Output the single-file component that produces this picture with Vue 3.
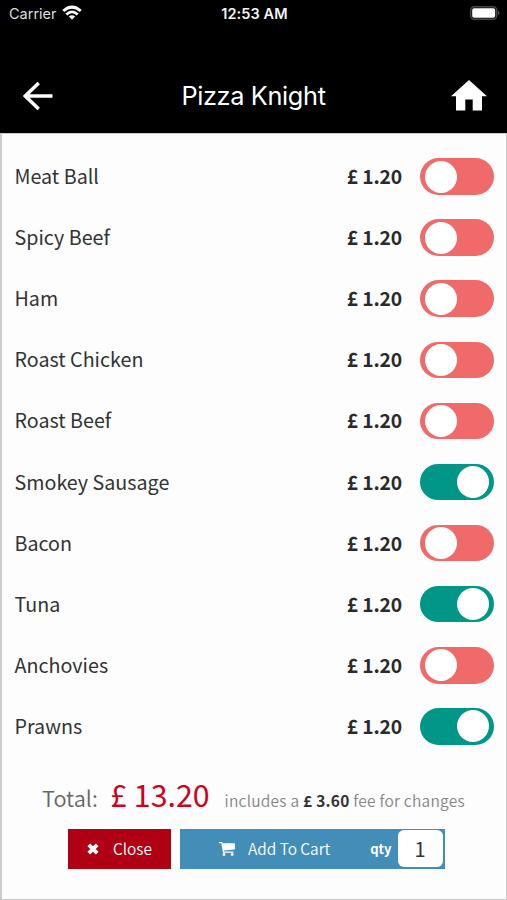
<script setup>
import { ref, computed } from 'vue'

const toppings = ref([
  { name: 'Meat Ball', on: false },
  { name: 'Spicy Beef', on: false },
  { name: 'Ham', on: false },
  { name: 'Roast Chicken', on: false },
  { name: 'Roast Beef', on: false },
  { name: 'Smokey Sausage', on: true },
  { name: 'Bacon', on: false },
  { name: 'Tuna', on: true },
  { name: 'Anchovies', on: false },
  { name: 'Prawns', on: true },
])
const price = 1.2
const base = 9.6
const qty = ref(1)
const fee = computed(() => toppings.value.filter((t) => t.on).length * price)
const total = computed(() => (base + fee.value) * qty.value)
const money = (n) => '£ ' + n.toFixed(2)
</script>

<template>
  <div class="screen">
    <header class="top">
      <div class="status">
        <div class="carrier">
          <span>Carrier</span>
          <svg class="wifi" viewBox="0 0 20 16" width="20" height="16">
            <path d="M1.300 6Q10-1.800 18.700 6" fill="none" stroke="#fff" stroke-width="3" />
            <path d="M4.300 9.400Q10 4.200 15.700 9.400" fill="none" stroke="#fff" stroke-width="2.700" />
            <path d="M6.800 11.600Q10 8.800 13.200 11.600L10 14.800Z" fill="#fff" />
          </svg>
        </div>
        <span class="clock">12:53 AM</span>
        <svg class="battery" viewBox="0 0 30 14" width="30" height="14">
          <rect x=".7" y=".7" width="26" height="12.600" rx="3.500" fill="none" stroke="#4a4a4c" stroke-width="1.400" />
          <rect x="2.200" y="2.200" width="23" height="9.600" rx="1.800" fill="#fff" />
          <path d="M28 4.800Q31 7 28 9.200Z" fill="#59595b" />
        </svg>
      </div>
      <div class="nav">
        <svg class="back" viewBox="0 0 30 28" width="30" height="28">
          <path d="M29.500 14H2.500M15.700 1L2.300 14L15.700 27" fill="none" stroke="#fff" stroke-width="3.500" />
        </svg>
        <h1>Pizza Knight</h1>
        <svg class="home" viewBox="0 0 36 31" width="36" height="31">
          <path d="M18 0L36 16.200H31V30.500H21.700V19.500H14.300V30.500H5V16.200H0Z" fill="#fff" />
        </svg>
      </div>
    </header>

    <main class="panel">
      <ul class="list">
        <li v-for="t in toppings" :key="t.name" class="row">
          <span class="name">{{ t.name }}</span>
          <span class="price">{{ money(price) }}</span>
          <button class="toggle" :class="{ on: t.on }" @click="t.on = !t.on"><i class="knob"></i></button>
        </li>
      </ul>

      <div class="summary">
        <span class="label">Total:</span>
        <span class="total">{{ money(total) }}</span>
        <span class="note">includes a <b>{{ money(fee) }}</b> fee for changes</span>
      </div>

      <div class="actions">
        <button class="close">
          <svg viewBox="0 0 12 12" width="12" height="12">
            <path d="M1.800 1.800L10.200 10.200M10.200 1.800L1.800 10.200" stroke="#fff" stroke-width="3.800" />
          </svg>
          <span>Close</span>
        </button>
        <div class="cart">
          <svg viewBox="0 0 16 14" width="16" height="14">
            <path d="M0 0H2.800Q3.500 0 3.700 1.200H15.400Q16 1.300 16 2V6.700Q16 7.300 15.300 7.400L5 8.600L5.200 9.500H14.400V10.700H4.300Q3.500 10.600 3.800 9.600L2.300 1.200H0Z" fill="#fff" />
            <circle cx="5" cy="12.500" r="1.400" fill="#fff" />
            <circle cx="13.200" cy="12.500" r="1.400" fill="#fff" />
          </svg>
          <span class="add">Add To Cart</span>
          <span class="qty">qty</span>
          <span class="count">{{ qty }}</span>
        </div>
      </div>
    </main>
  </div>
</template>

<style>
body {
  margin: 0;
  background: #fdfdfd;
}
</style>

<style scoped>
.screen {
  width: 507px;
  height: 900px;
  display: flex;
  flex-direction: column;
  overflow: hidden;
  font-family: "Noto Sans CJK SC", "Noto Sans", sans-serif;
  color: #333;
}
.top {
  flex: none;
  height: 133px;
  background: #000;
  color: #fff;
}
.status {
  height: 28px;
  display: grid;
  grid-template-columns: 1fr auto 1fr;
  align-items: center;
  padding: 0 7px 2px 9px;
  box-sizing: border-box;
  font-family: Inter, sans-serif;
  font-size: 14.500px;
}
.carrier {
  display: flex;
  align-items: center;
  gap: 5px;
  color: #ddd;
}
.wifi {
  margin-top: -1px;
}
.clock {
  font-weight: 600;
  letter-spacing: .1px;
  color: #f4f4f4;
}
.battery {
  justify-self: end;
}
.nav {
  height: 105px;
  display: flex;
  align-items: center;
  justify-content: space-between;
  padding: 30px 20px 0 23px;
  box-sizing: border-box;
}
h1 {
  margin: 0 0 0 3px;
  font: 400 25.300px/32px Inter, sans-serif;
  letter-spacing: -.35px;
}
.panel {
  flex: 1;
  box-sizing: border-box;
  border: solid #ccc;
  border-width: 1px 1px 1px 2px;
  background: #fdfdfd;
  padding-top: 12px;
}
.list {
  list-style: none;
  margin: 0;
  padding: 0 12.500px 0 12.500px;
}
.row {
  height: 61.100px;
  display: flex;
  align-items: center;
  font-size: 19.700px;
  line-height: 30px;
}
.name {
  flex: 1;
  margin-bottom: 1px;
}
.price {
  font-weight: 700;
  font-size: 19.300px;
  letter-spacing: -.15px;
  color: #2a2a2a;
  margin: 0 18px 1px 0;
}
button {
  border: 0;
  font: inherit;
  color: inherit;
}
.toggle {
  width: 73.500px;
  height: 36.500px;
  border-radius: 19px;
  padding: 0 5px;
  display: flex;
  align-items: center;
  background: #f06a6a;
}
.toggle.on {
  background: #009788;
  justify-content: flex-end;
}
.knob {
  width: 32px;
  height: 32px;
  border-radius: 50%;
  background: #fff;
}
.summary {
  height: 72px;
  box-sizing: border-box;
  padding: 17px 0 0 40px;
  display: flex;
  align-items: baseline;
  line-height: 40px;
  white-space: nowrap;
}
.label {
  font-size: 21.800px;
  font-weight: 350;
  color: #666;
}
.total {
  font-size: 30.300px;
  color: #d0021b;
  margin-left: 12.500px;
}
.note {
  font-size: 15.500px;
  font-weight: 350;
  letter-spacing: .24px;
  color: #858585;
  margin-left: 15px;
}
.note b {
  color: #333;
  font-weight: 700;
}
.actions {
  display: flex;
  gap: 9px;
  padding-left: 66px;
  font-size: 15.400px;
  color: #fff;
}
.close {
  width: 103px;
  height: 40px;
  padding: 0 0 0 19px;
  display: flex;
  align-items: center;
  gap: 14px;
  background: #b00013;
}
.close span,
.add {
  font-weight: 350;
  margin-bottom: 1px;
}
.cart {
  width: 265px;
  height: 40px;
  box-sizing: border-box;
  padding: 0 2.500px 0 39px;
  display: flex;
  align-items: center;
  background: #428eb9;
}
.add {
  flex: 1;
  margin-left: 13px;
}
.qty {
  font-weight: 700;
  font-size: 13px;
  margin: 0 6px 1px 0;
}
.count {
  width: 45px;
  height: 37px;
  margin-bottom: 1px;
  border-radius: 6px;
  background: #fff;
  color: #333;
  font-size: 20px;
  line-height: 37px;
  text-align: center;
}
</style>
